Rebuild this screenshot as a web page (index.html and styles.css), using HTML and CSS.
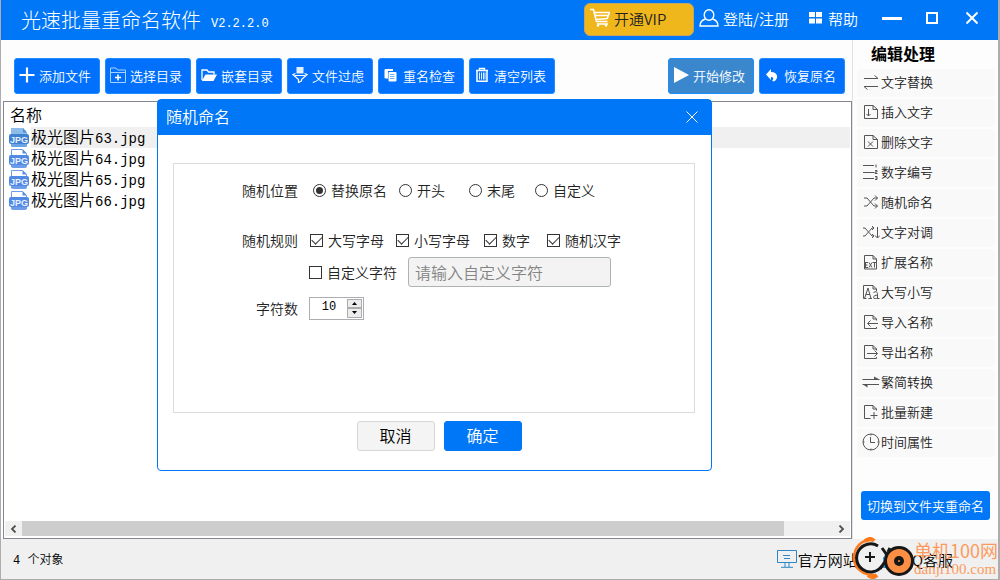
FILE: index.html
```html
<!DOCTYPE html>
<html lang="zh-CN">
<head>
<meta charset="utf-8">
<title>光速批量重命名软件</title>
<link rel="stylesheet" href="styles.css">
</head>
<body>
<div class="app">
  <header class="titlebar">
    <h1 class="title">光速批量重命名软件</h1>
    <span class="version">V2.2.2.0</span>
    <div class="title-actions">
      <button class="vip" type="button">
        <svg width="20" height="20" viewBox="0 0 20 20" fill="none" stroke="#fff" stroke-width="1.6"><path d="M0 1.5h3.5l3 12h11M4.3 4.5h15l-2 6-11 1M5 7.5h13M7 16h11"/><circle cx="8" cy="17.5" r="1.2" fill="#fff" stroke="none"/><circle cx="16" cy="17.5" r="1.2" fill="#fff" stroke="none"/></svg>
        开通VIP
      </button>
      <button class="title-btn login" type="button">
        <svg width="20" height="18" viewBox="0 0 20 18" fill="none" stroke="#fff" stroke-width="1.4"><ellipse cx="10" cy="6" rx="4.8" ry="5.2"/><path d="M6.5 10C3 11 1 13.500 1 17h18c0-3.500-2-6-5.500-7"/></svg>
        登陆/注册
      </button>
      <button class="title-btn help" type="button">
        <svg width="13" height="12" viewBox="0 0 13 12" fill="#fff"><path d="M0 0h6v5H0zM7 0h6v5H7zM0 6.500h6v5H0zM7 6.500h6v5H7z"/></svg>
        帮助
      </button>
    </div>
    <div class="window-actions">
      <button class="win-btn" type="button" aria-label="最小化"><svg width="20" height="12" viewBox="0 0 20 12"><path d="M0 6.500h20" stroke="#fff" stroke-width="3"/></svg></button>
      <button class="win-btn" type="button" aria-label="最大化"><svg width="12" height="12" viewBox="0 0 12 12"><path d="M1 1h10v10H1z" fill="none" stroke="#fff" stroke-width="2"/></svg></button>
      <button class="win-btn" type="button" aria-label="关闭"><svg width="12" height="12" viewBox="0 0 12 12"><path d="M.5.5l11 11M11.500.5l-11 11" stroke="#fff" stroke-width="2"/></svg></button>
    </div>
  </header>

  <div class="body">
    <main class="main">
      <div class="toolbar">
        <button class="tool" type="button"><svg width="16" height="16" viewBox="0 0 16 16"><path d="M8 .5v15M.5 8h15" stroke="#fff" stroke-width="2.200"/></svg>添加文件</button>
        <button class="tool" type="button"><svg width="16" height="16" viewBox="0 0 16 16" fill="none" stroke="#a9d2ff" stroke-width="1"><path d="M.5 15.500V1H6l1.500 2H15.500v12.500zM.5 5.500h15"/><path d="M8 7.500v6M5 10.500h6" stroke="#fff" stroke-width="1.600"/></svg>选择目录</button>
        <button class="tool" type="button"><svg width="16" height="16" viewBox="0 0 16 16"><path d="M1 13V3h5l1.500 2H13v2.500" fill="none" stroke="#fff" stroke-width="1.300"/><path d="M4.500 7.500H16L12.500 14H.8z" fill="#fff"/></svg>嵌套目录</button>
        <button class="tool" type="button"><svg width="16" height="16" viewBox="0 0 16 16"><path d="M4.500 0h7v6.500h-7z" fill="#e3f1ff"/><path d="M3.500 6.500L.8 7.500l5.700 5v3l3-1.500v-1.500l5.700-5-2.700-1M3 8.500h10" fill="none" stroke="#fff" stroke-width="1.200"/></svg>文件过虑</button>
        <button class="tool" type="button"><svg width="16" height="16" viewBox="0 0 16 16"><path d="M2.500 2H10v2H5v7.500H2.500q-1 0-1-1V3q0-1 1-1z" fill="#fff"/><path d="M6.500 5h6q1 0 1 1v7.500q0 1-1 1h-6q-1 0-1-1V6q0-1 1-1z" fill="#fff"/><path d="M7 7.500h4.500M7 9.500h4.500M7 11.500h4.500" stroke="#6faef7" stroke-width="1"/></svg>重名检查</button>
        <button class="tool" type="button"><svg width="16" height="16" viewBox="0 0 16 16" fill="none" stroke="#fff"><path d="M2 3.500h12M5.500 3.500V1.500h5v2" stroke-width="1.400"/><path d="M3 4v10.200h10V4" stroke-width="1.500"/><path d="M5.500 5.500v7M7.500 5.500v7M9.500 5.500v7M11 5.500v7" stroke-width=".9"/></svg>清空列表</button>
        <div class="tool-end">
          <button class="tool tool-start" type="button"><svg width="16" height="16" viewBox="0 0 16 16"><path d="M1 0l15 8-15 8z" fill="#fff"/></svg>开始修改</button>
          <button class="tool" type="button"><svg width="16" height="16" viewBox="0 0 16 16"><path d="M7 2v3c7 0 8 6.500 3 9.500-1-.5-1.500-.5-2-.5 2-2 1.500-4-1-4v3L2 7.500z" fill="#fff"/></svg>恢复原名</button>
        </div>
      </div>

      <section class="files">
        <table class="file-table">
          <thead><tr><th colspan="2">名称</th></tr></thead>
          <tbody>
            <tr class="selected"><td class="file-icon"><svg width="20" height="20" viewBox="0 0 20 20"><path d="M2 0h12l4 4.500V19H2z" fill="#8fbde9"/><path d="M14 0v4.500h4z" fill="#4c8edb"/><rect y="6" width="20" height="10" rx="2" fill="#3f82d2"/><path d="M2 16h16q0 3-3 3H5q-3 0-3-3z" fill="#6ba4e4"/><text x="10" y="14.500" class="jpg">JPG</text></svg></td><td>极光图片<span class="latin">63.jpg</span></td></tr>
            <tr><td class="file-icon"><svg width="20" height="20" viewBox="0 0 20 20"><path d="M2.500.5h11l4 4V18h-15z" fill="#fff" stroke="#6d9de8"/><path d="M13.500 0v4.500H18z" fill="#558be6"/><rect y="6" width="20" height="10" rx="2" fill="#5289e4"/><path d="M2 16h16q0 3-3 3H5q-3 0-3-3z" fill="#6d9de8"/><text x="10" y="14.500" class="jpg">JPG</text></svg></td><td>极光图片<span class="latin">64.jpg</span></td></tr>
            <tr><td class="file-icon"><svg width="20" height="20" viewBox="0 0 20 20"><path d="M2.500.5h11l4 4V18h-15z" fill="#fff" stroke="#6d9de8"/><path d="M13.500 0v4.500H18z" fill="#558be6"/><rect y="6" width="20" height="10" rx="2" fill="#5289e4"/><path d="M2 16h16q0 3-3 3H5q-3 0-3-3z" fill="#6d9de8"/><text x="10" y="14.500" class="jpg">JPG</text></svg></td><td>极光图片<span class="latin">65.jpg</span></td></tr>
            <tr><td class="file-icon"><svg width="20" height="20" viewBox="0 0 20 20"><path d="M2.500.5h11l4 4V18h-15z" fill="#fff" stroke="#6d9de8"/><path d="M13.500 0v4.500H18z" fill="#558be6"/><rect y="6" width="20" height="10" rx="2" fill="#5289e4"/><path d="M2 16h16q0 3-3 3H5q-3 0-3-3z" fill="#6d9de8"/><text x="10" y="14.500" class="jpg">JPG</text></svg></td><td>极光图片<span class="latin">66.jpg</span></td></tr>
          </tbody>
        </table>
        <div class="scrollbar">
          <button class="scroll-btn" type="button" aria-label="向左滚动"><svg width="7" height="8" viewBox="0 0 7 8"><path d="M5.500.5L2 4l3.500 3.500" fill="none" stroke="#505050" stroke-width="1.800"/></svg></button>
          <div class="scroll-track"><div class="scroll-thumb"></div></div>
          <button class="scroll-btn" type="button" aria-label="向右滚动"><svg width="7" height="8" viewBox="0 0 7 8"><path d="M1.500.5L5 4 1.500 7.500" fill="none" stroke="#505050" stroke-width="1.800"/></svg></button>
        </div>
      </section>
    </main>

    <aside class="side">
      <h2 class="side-title">编辑处理</h2>
      <nav class="side-list">
        <button class="side-item" type="button"><svg width="18" height="18" viewBox="0 0 18 18"><path d="M2 5.500h14M12.500 2.500l3.500 3M16 13.500H2M5.500 16.500l-3.500-3"/></svg>文字替换</button>
        <button class="side-item" type="button"><svg width="18" height="18" viewBox="0 0 18 18"><path d="M11 2.500H2.500v13h13V6.500zM11 2.500v4h4.500M6.500 6v7M4.500 11l2 2 2-2"/></svg>插入文字</button>
        <button class="side-item" type="button"><svg width="18" height="18" viewBox="0 0 18 18"><path d="M11 2.500H2.500v13h13V6.500zM11 2.500v4h4.500M6 8.500l5 5M11 8.500l-5 5"/></svg>删除文字</button>
        <button class="side-item" type="button"><svg width="18" height="18" viewBox="0 0 18 18"><path d="M1 2.500h11M1 9.500h11M1 15.500h11M14 1.500v3M13 7.500h2v1.500h-2v1.500h2.500M13 13.500h2v3h-2M13.500 15H15"/></svg>数字编号</button>
        <button class="side-item" type="button"><svg width="18" height="18" viewBox="0 0 18 18"><path d="M2 5h3l7 8h3.500M2 13h3l7-8h3.500M13 2.500L15.500 5 13 7.500M13 10.500l2.500 2.500-2.500 2.500"/></svg>随机命名</button>
        <button class="side-item" type="button"><svg width="18" height="18" viewBox="0 0 18 18"><path d="M1 5h2l7 8h2M1 13h2l7-8h2M10 3l2 2-2 2M10 11l2 2-2 2M15.500 4v11M13 12.500l2.500 2.500 2.500-2.500"/></svg>文字对调</button>
        <button class="side-item" type="button"><svg width="18" height="18" viewBox="0 0 18 18"><path d="M2.500 9V2.500H11L14.500 6v3M11 2.500V6h3.500M2.500 9v7h12V9M3 9.500h3M3 12h2.500M3 14.500h3M3.500 9.500v5M7 9.500l3 5M10 9.500l-3 5M10.500 9.500h4M12.500 9.500v5"/></svg>扩展名称</button>
        <button class="side-item" type="button"><svg width="18" height="18" viewBox="0 0 18 18"><path d="M1.500 15.500v-13H11L14.500 6v2M11 2.500V6h3.500M1.500 15.500h3M6.500 15.500H10M2.500 15.500L6 5l3 10.500M4 11.500h4M11.500 9.500q3.500-2 4 1v5.500M15.500 12q-4 0-4 2.500c0 1.500 3 1.500 4 0M16 15.500h1.500"/></svg>大写小写</button>
        <button class="side-item" type="button"><svg width="18" height="18" viewBox="0 0 18 18"><path d="M14.500 7.500V6L11 2.500H2.500v13h12V14M11 2.500V6h3.500M16 10.500H6M8.500 7.500l-3 3 3 3"/></svg>导入名称</button>
        <button class="side-item" type="button"><svg width="18" height="18" viewBox="0 0 18 18"><path d="M14.500 7.500V6L11 2.500H2.500v13h12V14M11 2.500V6h3.500M5 10.500h10.500M12.500 7.500l3 3-3 3"/></svg>导出名称</button>
        <button class="side-item" type="button"><svg width="18" height="18" viewBox="0 0 18 18"><path d="M.5 6.500h17M17 11.500H.5"/><path d="M12 3.500l5.500 3H12zM5.500 14.500l-4.500-3h4.500z" fill="#555" stroke="none"/></svg>繁简转换</button>
        <button class="side-item" type="button"><svg width="18" height="18" viewBox="0 0 18 18"><path d="M14.500 7.500V6L11 2.500H2.500v13h6M11 2.500V6h3.500M12 9v7M8.500 12.500h7"/></svg>批量新建</button>
        <button class="side-item" type="button"><svg width="18" height="18" viewBox="0 0 18 18"><circle cx="9" cy="9" r="8"/><path d="M8.500 4v5.500H13M9 1v1.500M9 15.500V17M1 9h1.500M15.500 9H17"/></svg>时间属性</button>
      </nav>
      <button class="switch" type="button">切换到文件夹重命名</button>
    </aside>
  </div>

  <footer class="status">
    <span class="count"><span class="mono">4 </span>个对象</span>
    <a class="link" href="#"><svg width="20" height="18" viewBox="0 0 20 18" fill="none" stroke="#2d87c8"><path d="M.5.5h19v12H.5zM6 5.500h7M7 8.500h6M8 12.500v4.500M12 12.500v4.500M4 17.300h12"/></svg>官方网站</a>
    <a class="link" href="#"><svg width="20" height="20" viewBox="0 0 20 20" fill="none" stroke="#3d95d2" stroke-width="2"><path d="M5 9a5 6 0 0 1 10 0c0 6-10 6-10 0zM4 8v4M3 18c1-4 13-4 14 0z"/></svg>QQ客服</a>
  </footer>

  <div class="watermark">
    <svg width="62" height="42" viewBox="0 0 62 42" fill="none">
      <path d="M21 3C9 2 2 11 2 21c0 10 9 18 22 17" stroke="#ff7a1c" stroke-width="2.500"/>
      <path d="M13 4q6-4 9 0M16 38q5 4 9 0" stroke="#ff7a1c" stroke-width="4"/>
      <path d="M26 9A14 14 0 1 0 30 29" stroke="#171717" stroke-width="3"/>
      <path d="M28 32l6-9M30 11l5 7M36 15l2-4" stroke="#171717" stroke-width="3"/>
      <path d="M18 15v10M13 20h10" stroke="#171717" stroke-width="2"/>
      <circle cx="47" cy="24" r="13.500" fill="#fd8f45" stroke="#171717" stroke-width="3"/>
      <circle cx="47" cy="24" r="5" fill="#171717"/><circle cx="47" cy="24" r="1" fill="#fd8f45"/>
    </svg>
    <div class="watermark-text"><strong>单机100网</strong><span>danji100.com</span></div>
  </div>

  <section class="dialog" role="dialog" aria-labelledby="dialog-title">
    <header class="dialog-head">
      <h2 id="dialog-title">随机命名</h2>
      <button class="dialog-close" type="button" aria-label="关闭"><svg width="12" height="12" viewBox="0 0 12 12"><path d="M.5.5l11 11M11.500.5l-11 11" stroke="#fff" stroke-width="1"/></svg></button>
    </header>
    <form class="dialog-form">
      <div class="panel">
        <div class="row row-place">
          <span class="label">随机位置</span>
          <div class="options options-place">
            <label class="option"><input type="radio" name="place" checked>替换原名</label>
            <label class="option"><input type="radio" name="place">开头</label>
            <label class="option"><input type="radio" name="place">末尾</label>
            <label class="option"><input type="radio" name="place">自定义</label>
          </div>
        </div>
        <div class="row">
          <span class="label">随机规则</span>
          <div class="options options-rule">
            <label class="option"><input type="checkbox" checked>大写字母</label>
            <label class="option"><input type="checkbox" checked>小写字母</label>
            <label class="option"><input type="checkbox" checked>数字</label>
            <label class="option"><input type="checkbox" checked>随机汉字</label>
          </div>
        </div>
        <div class="row row-custom">
          <span class="label"></span>
          <label class="option"><input type="checkbox">自定义字符</label>
          <input class="custom" type="text" placeholder="请输入自定义字符" aria-label="自定义字符内容" disabled>
        </div>
        <div class="row">
          <label class="label" for="char-count">字符数</label>
          <div class="spin">
            <input id="char-count" type="text" value="10">
            <div class="spin-btns">
              <button type="button" aria-label="增加"><svg width="5" height="3" viewBox="0 0 5 3"><path d="M0 3l2.500-3L5 3z"/></svg></button>
              <button type="button" aria-label="减少"><svg width="5" height="3" viewBox="0 0 5 3"><path d="M0 0l2.500 3L5 0z"/></svg></button>
            </div>
          </div>
        </div>
      </div>
      <div class="dialog-actions">
        <button class="btn" type="button">取消</button>
        <button class="btn btn-primary" type="button">确定</button>
      </div>
    </form>
  </section>
</div>
</body>
</html>
```
FILE: styles.css
```css
* { box-sizing: border-box; }

body {
  margin: 0;
  font-family: "Noto Sans CJK SC", sans-serif;
  font-size: 14px;
  font-weight: 350;
  color: #222;
}

button, input {
  font-family: inherit;
  font-size: inherit;
  font-weight: inherit;
  color: inherit;
  margin: 0;
  padding: 0;
}

button { border: 0; background: none; white-space: nowrap; }
svg { flex: none; display: block; }
h1, h2 { margin: 0; font-weight: inherit; }

.app {
  position: relative;
  display: flex;
  flex-direction: column;
  min-height: 100vh;
  border: 1px solid #adadad;
  border-width: 0 2px 1px 1px;
  background: #fdfdfd;
}

.titlebar {
  display: flex;
  align-items: center;
  height: 40px;
  padding-left: 20px;
  background: #0077f7;
  color: #fff;
}
.title { font-size: 20px; line-height: 38px; font-weight: 300; }
.version { margin: 8px 0 0 10px; font: 12px "Liberation Mono", monospace; }
.title-actions {
  display: flex;
  align-items: center;
  margin-left: auto;
  padding-bottom: 2px;
  font-size: 15px;
  height: 40px;
}
.vip {
  display: flex;
  align-items: center;
  gap: 4px;
  width: 110px;
  height: 33px;
  padding: 0 0 2px 5px;
  border: 1px solid #c9a45d;
  border-radius: 6px;
  background: #f0b71d;
  color: #222;
}
.title-btn { display: flex; align-items: center; gap: 4px; padding-bottom: 2px; }
.login { margin-left: 5px; }
.help { margin-left: 20px; gap: 6px; }
.window-actions { display: flex; margin: 0 6px 4px 14px; }
.win-btn {
  display: flex;
  align-items: center;
  justify-content: center;
  width: 40px;
  height: 32px;
}

.body { display: flex; flex: 1; }
.main {
  display: flex;
  flex-direction: column;
  flex: 1;
  padding-left: 2px;
}
.toolbar {
  display: flex;
  gap: 5px;
  padding: 18px 7px 7px 11px;
}
.tool-end { display: flex; gap: 5px; margin-left: auto; }
.tool {
  display: flex;
  align-items: center;
  gap: 4px;
  width: 86px;
  height: 36px;
  padding: 0 0 2px 4px;
  border: 1px solid #1c8cff;
  border-radius: 3px;
  background: #0070fd;
  color: #fff;
  font-size: 13px;
}
.tool-start { background: #3a87cd; }

.files {
  display: flex;
  flex-direction: column;
  flex: 1;
  padding: 1px 1px 2px;
  border: 1px solid #828790;
  background: #fff;
}
.file-table {
  width: 100%;
  border-collapse: collapse;
  color: #000;
  font-size: 16px;
  line-height: 19px;
}
.file-table th { padding: 1px 5px 3px; height: 24px; text-align: left; font-weight: inherit; }
.file-table td { padding: 0 0 2px; height: 21px; }
.file-table .file-icon { width: 26px; padding: 0 0 0 4px; }
.selected td + td { background: #f0f0f0; }
.latin { font: 14px/12px "Liberation Mono", monospace; }
.jpg {
  font: 700 9px "Liberation Sans", sans-serif;
  fill: #e6f2ff;
  text-anchor: middle;
}

.scrollbar { display: flex; height: 15px; margin-top: auto; background: #f0f0f0; }
.scroll-btn { display: flex; align-items: center; justify-content: center; width: 17px; }
.scroll-track { flex: 1; display: flex; }
.scroll-thumb { width: 94%; background: #cdcdcd; }

.side {
  display: flex;
  flex-direction: column;
  width: 146px;
  padding: 0 3px 19px 4px;
  border-left: 1px solid #e3e3e3;
}
.side-title {
  padding: 0 14px 2px;
  font-size: 16px;
  line-height: 27px;
  font-weight: 700;
  color: #000;
}
.side-list { display: flex; flex-direction: column; gap: 2px; }
.side-item {
  display: flex;
  align-items: center;
  gap: 1px;
  height: 28px;
  padding: 0 0 3px 5px;
  border-radius: 3px;
  background: #f9f9f9;
  font-size: 13px;
}
.side-item svg { fill: none; stroke: #555; stroke-width: 1; }
.switch {
  height: 29px;
  margin: auto 5px 0 4px;
  padding-bottom: 1px;
  border-radius: 3px;
  background: #0077f7;
  color: #fff;
  font-size: 13px;
}

.status {
  display: flex;
  align-items: center;
  gap: 22px;
  height: 40px;
  padding: 0 45px 0 12px;
  background: #f0f0f0;
  color: #000;
}
.count { margin-right: auto; font-size: 12px; }
.mono { font-family: "Liberation Mono", monospace; white-space: pre; }
.link {
  display: flex;
  align-items: center;
  gap: 1px;
  color: #000;
  font-size: 15px;
  text-decoration: none;
}

.watermark {
  position: absolute;
  right: 0;
  bottom: 0;
  display: flex;
  align-items: flex-end;
  color: #fd9a5b;
}
.watermark-text { display: flex; flex-direction: column; padding-bottom: 1px; }
.watermark-text strong { font-size: 18px; line-height: 22px; font-weight: 400; }
.watermark-text span { font: 15px/17px "Liberation Serif", serif; }

.dialog {
  position: absolute;
  left: 156px;
  top: 99px;
  width: 555px;
  border: 1px solid #0077f7;
  border-radius: 4px;
  background: #fff;
}
.dialog-head {
  display: flex;
  align-items: center;
  justify-content: space-between;
  height: 35px;
  padding: 0 13px 2px 8px;
  background: #0077f7;
  color: #fff;
}
.dialog-head h2 { padding-bottom: 2px; font-size: 16px; line-height: 30px; }
.dialog-form { padding: 28px 16px 19px 15px; }
.panel {
  display: flex;
  flex-direction: column;
  min-height: 250px;
  padding-top: 11px;
  border: 1px solid #dcdcdc;
}
.row { display: flex; align-items: center; min-height: 30px; }
.row-place { margin-bottom: 20px; }
.row-custom { margin: 2px 0 6px; }
.label { width: 124px; margin-right: 11px; text-align: right; }
.options { display: grid; }
.options-place { grid-template-columns: 86px 70px 66px auto; padding-left: 4px; }
.options-rule { grid-template-columns: 86px 88px 63px auto; padding-left: 1px; }
.option { display: flex; align-items: center; gap: 5px; white-space: nowrap; }
.option input {
  appearance: none;
  display: grid;
  place-items: center;
  width: 13px;
  height: 13px;
  border: 1px solid #333;
  background: #fff;
}
.option input[type="radio"] { border-radius: 50%; }
.option input[type="radio"]:checked::before {
  content: "";
  width: 7px;
  height: 7px;
  border-radius: 50%;
  background: #333;
}
.option input[type="checkbox"]:checked::before {
  content: "";
  width: 9px;
  height: 5px;
  margin-bottom: 3px;
  border: solid #333;
  border-width: 0 0 1px 1px;
  transform: rotate(-45deg);
}
.custom {
  width: 203px;
  height: 30px;
  margin-left: 11px;
  padding: 0 6px;
  border: 1px solid #adb2b5;
  border-radius: 3px;
  background: #f3f3f3;
  font-size: 16px;
}
.custom::placeholder { color: #858585; }
.spin {
  display: flex;
  width: 55px;
  height: 23px;
  padding: 1px;
  border: 1px solid #abadb3;
}
.spin input {
  flex: 1;
  min-width: 0;
  padding-bottom: 3px;
  border: 0;
  text-align: center;
  font-family: "Liberation Mono", monospace;
  font-size: 12px;
  color: #000;
}
.spin-btns { display: flex; flex-direction: column; width: 15px; }
.spin-btns button {
  display: flex;
  align-items: center;
  justify-content: center;
  flex: 1;
  border: 1px solid #acacac;
  background: #ececec;
}
.dialog-actions { display: flex; justify-content: center; gap: 9px; padding: 8px 0 0 10px; }
.btn {
  width: 78px;
  height: 30px;
  padding-bottom: 2px;
  border: 1px solid #d6d6d6;
  border-radius: 3px;
  background: #f4f4f4;
  color: #000;
  font-size: 16px;
  line-height: 24px;
}
.btn-primary { border-color: #0077f7; background: #0077f7; color: #fff; }
```
